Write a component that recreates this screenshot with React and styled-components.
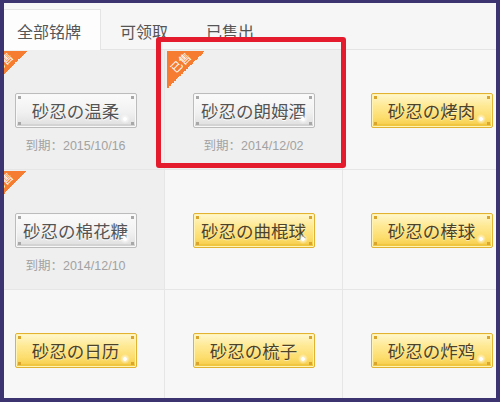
import React from "react";
import styled, { createGlobalStyle, css } from "styled-components";

const GlobalStyle = createGlobalStyle`
  html, body { margin: 0; padding: 0; background: #3b3470; }
  * { box-sizing: border-box; }
`;

const Frame = styled.div`
  width: 500px;
  height: 402px;
  background: #3b3470;
  padding: 3px 4px 4px 4px;
`;

const Panel = styled.div`
  position: relative;
  height: 100%;
  background: #f6f6f7;
  overflow: hidden;
  display: flex;
  flex-direction: column;
  font-family: "Noto Sans CJK SC", "Liberation Sans", sans-serif;
`;

const TabBar = styled.div`
  height: 47px;
  flex: none;
  display: flex;
  align-items: flex-end;
  border-bottom: 1px solid #e4e4e4;
`;

const Tab = styled.div`
  height: 40px;
  line-height: 42px;
  padding: 0 19px;
  font-size: 16px;
  color: #555;
  margin-bottom: -1px;
  ${(p) =>
    p.$active &&
    css`
      background: #fdfdfd;
      border-top: 1px solid #e4e4e4;
      border-right: 1px solid #e4e4e4;
      padding-left: 13px;
      height: 41px;
    `}
`;

const GridWrap = styled.div`
  flex: 1;
  overflow: hidden;
`;

const Grid = styled.div`
  display: grid;
  grid-template-columns: repeat(3, 178px);
  grid-auto-rows: 120px;
  margin-left: -17px;
`;

const Cell = styled.div`
  position: relative;
  background: ${(p) => (p.$sold ? "#efefef" : "#f7f7f8")};
  border-right: 1px solid #e6e6e6;
  border-bottom: 1px solid #e6e6e6;
  display: flex;
  flex-direction: column;
  align-items: center;
  padding-top: 43px;
`;

const Ribbon = styled.div`
  position: absolute;
  top: 1px;
  left: 2px;
  width: 38px;
  height: 38px;
  background: linear-gradient(135deg, #f57c31 50%, transparent 50%);
`;

const RibbonText = styled.span`
  position: absolute;
  left: 2px;
  top: 5px;
  font-size: 11.5px;
  line-height: 13px;
  color: #fff;
  transform: rotate(-45deg);
`;

const Plate = styled.div`
  position: relative;
  width: 122px;
  height: 35px;
  line-height: 33px;
  text-align: center;
  font-size: 17.5px;
  white-space: nowrap;
  border-radius: 2px;
  ${(p) =>
    p.$gold
      ? css`
          color: #4d4226;
          background: linear-gradient(#fff7cf 0%, #fee995 35%, #fcdd6c 72%, #f5ca45 100%);
          border: 1px solid #e2b232;
          box-shadow: inset 0 0 0 1px #fff4b4, inset 0 -3px 0 0 #f0c640;
          text-shadow: 0 1px 0 rgba(255, 255, 255, 0.5);
        `
      : css`
          color: #545454;
          background: linear-gradient(#fbfbfb 0%, #f1f1f1 55%, #dedede 100%);
          border: 1px solid #bcbcbc;
          box-shadow: inset 0 0 0 1px #f8f8f8, inset 0 -3px 0 0 #d3d3d3;
          text-shadow: 0 1px 0 #fff;
        `}
`;

const Corner = styled.span`
  position: absolute;
  width: 3px;
  height: 3px;
  background: ${(p) => (p.$gold ? "#d9a52c" : "#a8a8a8")};
  ${(p) => (p.$top ? "top: 2px;" : "bottom: 2px;")}
  ${(p) => (p.$left ? "left: 2px;" : "right: 2px;")}
`;

const Sparkle = styled.span`
  position: absolute;
  right: 6px;
  bottom: 3px;
  width: 10px;
  height: 10px;
  background: radial-gradient(circle, #ffffff 0 1.5px, rgba(255,255,255,0.6) 2px, transparent 5px);
`;

const DateText = styled.div`
  margin-top: 10px;
  font-family: "Liberation Sans", "Noto Sans CJK SC", sans-serif;
  font-size: 12.5px;
  line-height: 16px;
  color: #a2a2a2;
`;

const Annotation = styled.div`
  position: absolute;
  left: 152px;
  top: 34px;
  width: 190px;
  height: 131px;
  border: 5px solid #e31b2c;
  border-radius: 3px;
  pointer-events: none;
`;

const items = [
  { name: "砂忍の温柔", sold: true, date: "2015/10/16" },
  { name: "砂忍の朗姆酒", sold: true, date: "2014/12/02" },
  { name: "砂忍の烤肉" },
  { name: "砂忍の棉花糖", sold: true, date: "2014/12/10" },
  { name: "砂忍の曲棍球" },
  { name: "砂忍の棒球" },
  { name: "砂忍の日历" },
  { name: "砂忍の梳子" },
  { name: "砂忍の炸鸡" },
];

function NamePlate({ name, gold }) {
  return (
    <Plate $gold={gold}>
      {name}
      <Corner $gold={gold} $top $left />
      <Corner $gold={gold} $top />
      <Corner $gold={gold} $left />
      <Corner $gold={gold} />
      <Sparkle />
    </Plate>
  );
}

export default function App() {
  return (
    <>
      <GlobalStyle />
      <Frame>
        <Panel>
          <TabBar>
            <Tab $active>全部铭牌</Tab>
            <Tab>可领取</Tab>
            <Tab>已售出</Tab>
          </TabBar>
          <GridWrap>
            <Grid>
              {items.map((it) => (
                <Cell key={it.name} $sold={it.sold}>
                  {it.sold && (
                    <Ribbon>
                      <RibbonText>已售</RibbonText>
                    </Ribbon>
                  )}
                  <NamePlate name={it.name} gold={!it.sold} />
                  {it.date && <DateText>到期：{it.date}</DateText>}
                </Cell>
              ))}
            </Grid>
          </GridWrap>
          <Annotation />
        </Panel>
      </Frame>
    </>
  );
}
